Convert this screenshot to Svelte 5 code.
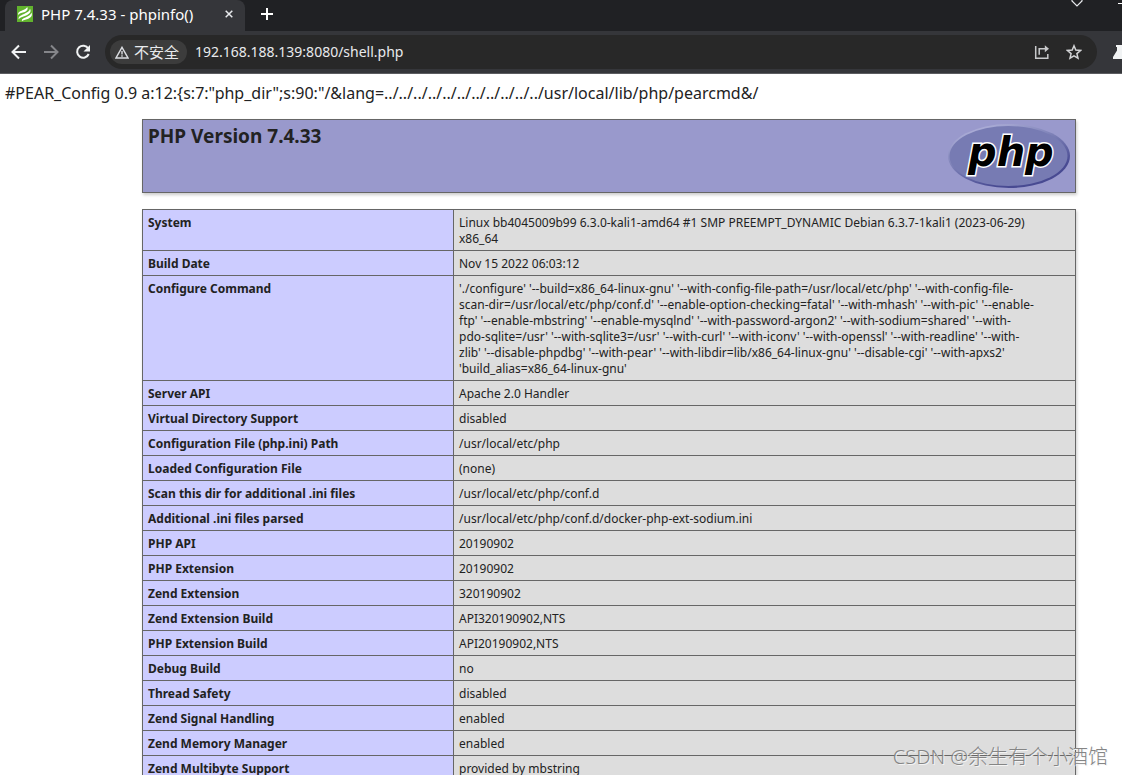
<script>
  const rows = [
    ['System', 'Linux bb4045009b99 6.3.0-kali1-amd64 #1 SMP PREEMPT_DYNAMIC Debian 6.3.7-1kali1 (2023-06-29)\nx86_64'],
    ['Build Date', 'Nov 15 2022 06:03:12'],
    ['Configure Command', "'./configure' '--build=x86_64-linux-gnu' '--with-config-file-path=/usr/local/etc/php' '--with-config-file-\nscan-dir=/usr/local/etc/php/conf.d' '--enable-option-checking=fatal' '--with-mhash' '--with-pic' '--enable-\nftp' '--enable-mbstring' '--enable-mysqlnd' '--with-password-argon2' '--with-sodium=shared' '--with-\npdo-sqlite=/usr' '--with-sqlite3=/usr' '--with-curl' '--with-iconv' '--with-openssl' '--with-readline' '--with-\nzlib' '--disable-phpdbg' '--with-pear' '--with-libdir=lib/x86_64-linux-gnu' '--disable-cgi' '--with-apxs2'\n'build_alias=x86_64-linux-gnu'"],
    ['Server API', 'Apache 2.0 Handler'],
    ['Virtual Directory Support', 'disabled'],
    ['Configuration File (php.ini) Path', '/usr/local/etc/php'],
    ['Loaded Configuration File', '(none)'],
    ['Scan this dir for additional .ini files', '/usr/local/etc/php/conf.d'],
    ['Additional .ini files parsed', '/usr/local/etc/php/conf.d/docker-php-ext-sodium.ini'],
    ['PHP API', '20190902'],
    ['PHP Extension', '20190902'],
    ['Zend Extension', '320190902'],
    ['Zend Extension Build', 'API320190902,NTS'],
    ['PHP Extension Build', 'API20190902,NTS'],
    ['Debug Build', 'no'],
    ['Thread Safety', 'disabled'],
    ['Zend Signal Handling', 'enabled'],
    ['Zend Memory Manager', 'enabled'],
    ['Zend Multibyte Support', 'provided by mbstring']
  ];
  let address = $state('192.168.188.139:8080/shell.php');
</script>

<div class="browser">
  <header class="tabs">
    <div class="tab">
      <svg width="16" height="16" viewBox="0 0 16 16" aria-hidden="true">
        <rect width="16" height="16" fill="#62b32e" />
        <g fill="#fff">
          <path d="M1.200 9C.6 6.600 2.500 5.600 5 4.500 7.500 3.500 9.600 2.600 10.200 1 11.600 3.600 9.600 5.300 6.800 6.300 4.300 7.200 2 7.300 1.200 9Z" />
          <path d="M1.800 13.300C.9 10.600 3.300 9.500 7 7.900 10.200 6.500 12.600 5.300 13 2.800 14.900 6.200 12 8.400 8.500 9.800 5.500 11 3 11.200 1.800 13.300Z" />
          <path d="M5 15.200C4.400 13 6.200 12.400 9 11.200 11.800 10 14 8.800 14.400 6.500 15.900 9.800 13.700 11.600 10.800 12.900 8.300 13.900 6 13.800 5 15.200Z" />
        </g>
      </svg>
      <span class="title">PHP 7.4.33 - phpinfo()</span>
      <button class="close" aria-label="Close tab">
        <svg width="8" height="8" viewBox="0 0 8 8"><path d="M.7.7l6.600 6.600M7.300.7L.7 7.300" stroke="#e8eaed" stroke-width="1.500" /></svg>
      </button>
    </div>
    <button class="new" aria-label="New tab">
      <svg width="12" height="12" viewBox="0 0 12 12"><path d="M6 0v12M0 6h12" stroke="#fff" stroke-width="2" /></svg>
    </button>
    <div class="window">
      <button aria-label="Search tabs"><svg width="12" height="7" viewBox="0 0 12 7"><path d="M1 0v1l5 5 5-5V0" fill="none" stroke="#e8eaed" stroke-width="1.200" /></svg></button>
      <button aria-label="Minimize"><svg width="4" height="7" viewBox="0 0 4 7"><path d="M0 3.500h4" stroke="#fff" /></svg></button>
    </div>
  </header>

  <nav class="toolbar">
    <button aria-label="Back"><svg width="16" height="16" viewBox="0 0 16 16"><path d="M15 8H2M8 1.500L1.500 8 8 14.500" fill="none" stroke="#f1f3f4" stroke-width="2" /></svg></button>
    <button aria-label="Forward"><svg width="16" height="16" viewBox="0 0 16 16"><path d="M1 8h13M8 1.500L14.500 8 8 14.500" fill="none" stroke="#85868a" stroke-width="2" /></svg></button>
    <button aria-label="Reload"><svg width="16" height="16" viewBox="0 0 16 16"><path d="M13.300 4.600A6 6 0 1 0 13.700 10" fill="none" stroke="#f1f3f4" stroke-width="2" /><path d="M15 1v6.500H8.500Z" fill="#f1f3f4" /></svg></button>
    <div class="omnibox">
      <button class="unsafe">
        <svg width="14" height="13" viewBox="0 0 14 13" aria-hidden="true"><path d="M7 1.300L13 12H1Z" fill="none" stroke="#dadce0" stroke-width="1.400" /><path d="M7 5v3.500M7 9.300v1.500" stroke="#dadce0" stroke-width="1.400" /></svg>
        不安全
      </button>
      <input aria-label="Address" bind:value={address} spellcheck="false" />
      <button aria-label="Share"><svg width="16" height="16" viewBox="0 0 16 16"><path d="M1.700 2v12.300h12.100V10M5.200 10.800V4.700h7.500" fill="none" stroke="#c8c9cb" stroke-width="1.500" /><path d="M10.800 1.200L15 4.700l-4.200 3.600Z" fill="#c8c9cb" /></svg></button>
      <button aria-label="Bookmark"><svg width="16" height="16" viewBox="0 0 16 16"><path d="M8 1.800l1.800 4.300 4.700.4-3.600 3.100 1.100 4.600L8 11.800l-4 2.400 1.100-4.600L1.500 6.500l4.700-.4Z" fill="none" stroke="#d2d3d5" stroke-width="1.500" /></svg></button>
    </div>
    <button class="flask" aria-label="Labs"><svg width="9" height="14" viewBox="0 0 9 14"><path d="M3 0h6v14H0v-2l4-6.500V2H3Z" fill="#f1f3f4" /></svg></button>
  </nav>

  <main>
    <p class="config">#PEAR_Config 0.9 a:12:&lbrace;s:7:"php_dir";s:90:"/&amp;lang=../../../../../../../../../../../usr/local/lib/php/pearcmd&amp;/</p>
    <div class="content">
      <section class="banner">
        <h1>PHP Version 7.4.33</h1>
        <svg class="logo" width="122" height="65" viewBox="0 0 122 65" role="img" aria-label="PHP logo">
          <defs>
            <linearGradient id="rim" x1="0.200" y1="0" x2="0.800" y2="1">
              <stop offset="0" stop-color="#b4b5dc" />
              <stop offset="0.450" stop-color="#777bb3" />
              <stop offset="0.800" stop-color="#484a92" />
            </linearGradient>
          </defs>
          <ellipse cx="61" cy="32" rx="61" ry="32" fill="url(#rim)" />
          <ellipse cx="60.500" cy="32" rx="59" ry="30" fill="#777bb3" />
          <text x="20" y="42">php</text>
        </svg>
      </section>
      <table>
        <tbody>
          {#each rows as [name, value]}
            <tr><th scope="row">{name}</th><td>{value}</td></tr>
          {/each}
        </tbody>
      </table>
    </div>
  </main>
  <div class="mark">CSDN @余生有个小酒馆</div>
</div>

<style>
  :global(body) { margin: 0; background: #fff; }
  .browser {
    position: relative;
    display: flex;
    flex-direction: column;
    height: 100vh;
    overflow: hidden;
    font-family: "Noto Sans", "Noto Sans CJK SC", sans-serif;
    color: #222;
  }
  button {
    display: flex;
    align-items: center;
    justify-content: center;
    padding: 0;
    border: 0;
    background: none;
    font: inherit;
    color: inherit;
    flex: none;
  }
  svg { display: block; flex: none; }
  .tabs {
    display: flex;
    flex: none;
    height: 31px;
    padding-left: 5px;
    background: #202124;
  }
  .tab {
    display: flex;
    align-items: center;
    width: 240px;
    box-sizing: border-box;
    padding: 0 10px 3px 12px;
    border-radius: 8px 8px 0 0;
    background: #35363a;
    color: #fff;
    font-size: 15px;
  }
  .title { flex: 1; padding-left: 8px; white-space: nowrap; }
  .close { width: 12px; height: 16px; }
  .new { width: 44px; height: 28px; }
  .window { display: flex; align-items: flex-start; gap: 35px; margin-left: auto; }
  .toolbar {
    display: flex;
    flex: none;
    align-items: center;
    gap: 16px;
    height: 42px;
    padding-left: 11px;
    border-bottom: 1px solid #5b5c60;
    background: #35363a;
  }
  .omnibox {
    display: flex;
    flex: 1;
    align-items: center;
    gap: 16px;
    box-sizing: border-box;
    height: 34px;
    margin-left: -2px;
    padding: 0 15px 0 5px;
    border-radius: 17px;
    background: #282828;
    color: #e8eaed;
    font-size: 14px;
  }
  .unsafe {
    gap: 5px;
    height: 24px;
    padding: 0 8px 0 5px;
    border-radius: 12px;
    background: #3c3c3c;
    font-size: 15px;
    line-height: 24px;
  }
  input {
    flex: 1;
    min-width: 0;
    margin-left: -8px;
    padding: 0 0 2px;
    border: 0;
    outline: 0;
    background: none;
    color: inherit;
    font: inherit;
  }
  .config {
    margin: 0;
    padding: 8px 5px 0;
    font-size: 16px;
    line-height: 22px;
    white-space: nowrap;
  }
  .content { margin: 15px 46px 0 142px; }
  .banner {
    display: flex;
    justify-content: space-between;
    align-items: flex-start;
    box-sizing: border-box;
    height: 74px;
    padding: 4px 5px;
    border: 1px solid #666;
    background: #9999cc;
    box-shadow: 1px 2px 3px #ccc;
  }
  h1 { margin: 0; font-size: 19px; line-height: 24px; font-weight: 700; }
  .logo { overflow: visible; }
  .logo text {
    font: italic 700 40px "DejaVu Sans", sans-serif;
    fill: #000;
    stroke: #fff;
    stroke-width: 3px;
    paint-order: stroke;
  }
  table {
    width: 100%;
    margin-top: 16px;
    border-collapse: collapse;
    table-layout: fixed;
    box-shadow: 1px 2px 3px #ccc;
    font-size: 12px;
    line-height: 16px;
  }
  th, td {
    padding: 5px 5px 3px;
    border: 1px solid #666;
    text-align: left;
    vertical-align: top;
  }
  th { width: 300px; background: #ccccff; font-weight: 700; }
  td { background: #ddd; white-space: pre-line; overflow-wrap: break-word; }
  .mark {
    position: absolute;
    right: 14px;
    bottom: 4px;
    font-size: 20px;
    line-height: 28px;
    font-weight: 300;
    color: #858585;
    text-shadow: 1px 1px 0 #f4f4f4;
    white-space: nowrap;
  }
</style>
